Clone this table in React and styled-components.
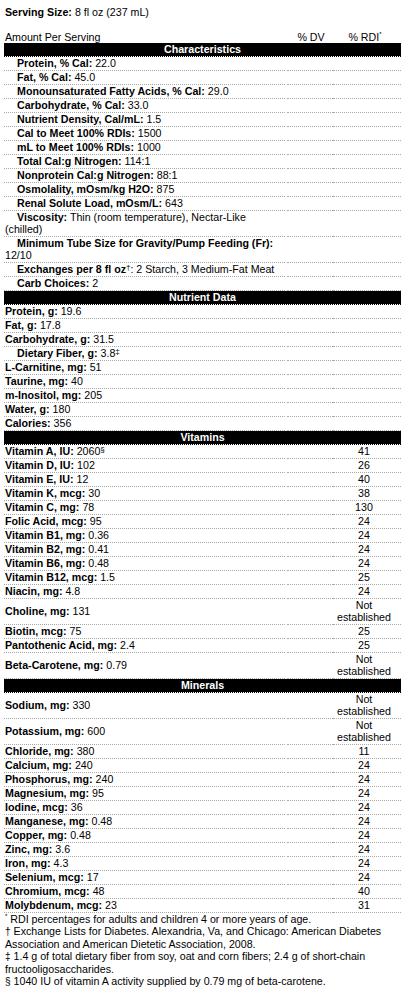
import React from 'react';
import styled, { createGlobalStyle } from 'styled-components';

const GlobalStyle = createGlobalStyle`
  body {
    margin: 0;
    background: #fff;
  }
`;

const characteristics = [
  { label: 'Protein, % Cal:', value: '22.0' },
  { label: 'Fat, % Cal:', value: '45.0' },
  { label: 'Monounsaturated Fatty Acids, % Cal:', value: '29.0' },
  { label: 'Carbohydrate, % Cal:', value: '33.0' },
  { label: 'Nutrient Density, Cal/mL:', value: '1.5' },
  { label: 'Cal to Meet 100% RDIs:', value: '1500' },
  { label: 'mL to Meet 100% RDIs:', value: '1000' },
  { label: 'Total Cal:g Nitrogen:', value: '114:1' },
  { label: 'Nonprotein Cal:g Nitrogen:', value: '88:1' },
  { label: 'Osmolality, mOsm/kg H2O:', value: '875' },
  { label: 'Renal Solute Load, mOsm/L:', value: '643' },
  { label: 'Viscosity:', value: 'Thin (room temperature), Nectar-Like', wrap: '(chilled)' },
  { label: 'Minimum Tube Size for Gravity/Pump Feeding (Fr):', value: '', wrap: '12/10' },
  { label: 'Exchanges per 8 fl oz', sup: '†', value: ': 2 Starch, 3 Medium-Fat Meat', bareColon: true },
  { label: 'Carb Choices:', value: '2' },
];

const nutrients = [
  { label: 'Protein, g:', value: '19.6' },
  { label: 'Fat, g:', value: '17.8' },
  { label: 'Carbohydrate, g:', value: '31.5' },
  { label: 'Dietary Fiber, g:', value: '3.8', valueSup: '‡', indent: true },
  { label: 'L-Carnitine, mg:', value: '51' },
  { label: 'Taurine, mg:', value: '40' },
  { label: 'm-Inositol, mg:', value: '205' },
  { label: 'Water, g:', value: '180' },
  { label: 'Calories:', value: '356' },
];

const NE = 'Not established';

const vitamins = [
  { label: 'Vitamin A, IU:', value: '2060', valueSup: '§', rdi: '41' },
  { label: 'Vitamin D, IU:', value: '102', rdi: '26' },
  { label: 'Vitamin E, IU:', value: '12', rdi: '40' },
  { label: 'Vitamin K, mcg:', value: '30', rdi: '38' },
  { label: 'Vitamin C, mg:', value: '78', rdi: '130' },
  { label: 'Folic Acid, mcg:', value: '95', rdi: '24' },
  { label: 'Vitamin B1, mg:', value: '0.36', rdi: '24' },
  { label: 'Vitamin B2, mg:', value: '0.41', rdi: '24' },
  { label: 'Vitamin B6, mg:', value: '0.48', rdi: '24' },
  { label: 'Vitamin B12, mcg:', value: '1.5', rdi: '25' },
  { label: 'Niacin, mg:', value: '4.8', rdi: '24' },
  { label: 'Choline, mg:', value: '131', rdi: NE },
  { label: 'Biotin, mcg:', value: '75', rdi: '25' },
  { label: 'Pantothenic Acid, mg:', value: '2.4', rdi: '25' },
  { label: 'Beta-Carotene, mg:', value: '0.79', rdi: NE },
];

const minerals = [
  { label: 'Sodium, mg:', value: '330', rdi: NE },
  { label: 'Potassium, mg:', value: '600', rdi: NE },
  { label: 'Chloride, mg:', value: '380', rdi: '11' },
  { label: 'Calcium, mg:', value: '240', rdi: '24' },
  { label: 'Phosphorus, mg:', value: '240', rdi: '24' },
  { label: 'Magnesium, mg:', value: '95', rdi: '24' },
  { label: 'Iodine, mcg:', value: '36', rdi: '24' },
  { label: 'Manganese, mg:', value: '0.48', rdi: '24' },
  { label: 'Copper, mg:', value: '0.48', rdi: '24' },
  { label: 'Zinc, mg:', value: '3.6', rdi: '24' },
  { label: 'Iron, mg:', value: '4.3', rdi: '24' },
  { label: 'Selenium, mcg:', value: '17', rdi: '24' },
  { label: 'Chromium, mcg:', value: '48', rdi: '40' },
  { label: 'Molybdenum, mcg:', value: '23', rdi: '31' },
];

const Label = ({ item }) => (
  <Text $indent={item.indent}>
    <b>{item.label}</b>
    {item.sup && <Sup>{item.sup}</Sup>}
    {item.bareColon ? item.value : item.value ? ` ${item.value}` : ''}
    {item.valueSup && <Sup>{item.valueSup}</Sup>}
    {item.wrap && (
      <>
        <br />
        {item.wrap}
      </>
    )}
  </Text>
);

const Section = ({ title, rows, indent }) => (
  <>
    <Bar>{title}</Bar>
    {rows.map((item) => (
      <Row key={item.label}>
        <FirstCell>
          <Label item={{ ...item, indent: indent || item.indent }} />
        </FirstCell>
        <Cell $center />
        <Cell $center>
          <Value>{item.rdi}</Value>
        </Cell>
      </Row>
    ))}
  </>
);

const App = () => {
  return (
    <Page>
      <GlobalStyle />
      <Serving>
        <b>Serving Size:</b> 8 fl oz (237 mL)
      </Serving>
      <HeadRow>
        <span>Amount Per Serving</span>
        <HeadCol>% DV</HeadCol>
        <HeadCol>
          % RDI<TinySup>*</TinySup>
        </HeadCol>
      </HeadRow>
      <Section title="Characteristics" rows={characteristics} indent />
      <Section title="Nutrient Data" rows={nutrients} />
      <Section title="Vitamins" rows={vitamins} />
      <Section title="Minerals" rows={minerals} />
      <Notes>
        <p>
          <TinySup>*</TinySup> RDI percentages for adults and children 4 or more years of age.
        </p>
        <p>
          <NoteMark>†</NoteMark> Exchange Lists for Diabetes. Alexandria, Va, and Chicago: American
          Diabetes Association and American Dietetic Association, 2008.
        </p>
        <p>
          <NoteMark>‡</NoteMark> 1.4 g of total dietary fiber from soy, oat and corn fibers; 2.4 g of
          short-chain fructooligosaccharides.
        </p>
        <p>
          <NoteMark>§</NoteMark> 1040 IU of vitamin A activity supplied by 0.79 mg of beta-carotene.
        </p>
      </Notes>
    </Page>
  );
};

export default App;

const Page = styled.div`
  width: 397px;
  padding: 6px 0 0 4px;
  font-family: 'Liberation Sans', Arial, sans-serif;
  font-size: 8pt;
  line-height: 12px;
  color: #000;
`;

const Serving = styled.div`
  padding-left: 1px;
  margin-bottom: 13px;
`;

const HeadRow = styled.div`
  display: grid;
  grid-template-columns: 283px 46px 62px;
  padding-left: 1px;
`;

const HeadCol = styled.span`
  text-align: center;
`;

const Bar = styled.div`
  background: #000;
  background-clip: padding-box;
  color: #fff;
  font-weight: 700;
  text-align: center;
  line-height: 13px;
  border-bottom: 1px dotted #000;
`;

const Row = styled.div`
  display: grid;
  grid-template-columns: 283px 46px 68px;
`;

const Cell = styled.div`
  display: flex;
  align-items: center;
  justify-content: ${(p) => (p.$center ? 'center' : 'flex-start')};
  padding-bottom: 1px;
  border-bottom: 1px dotted #a8a8a8;
`;

const FirstCell = styled(Cell)`
  margin-right: 2px;
  padding-left: 1px;
`;

const Text = styled.div`
  text-indent: ${(p) => (p.$indent ? '12px' : '0')};
`;

const Value = styled.div`
  text-align: center;
  width: 56px;
  margin-right: 6px;
`;

const Sup = styled.span`
  font-size: 8px;
  line-height: 0;
  vertical-align: 3px;
`;

const NoteMark = styled.span`
  font-size: 10px;
`;

const TinySup = styled.span`
  font-size: 6px;
  line-height: 0;
  vertical-align: 5px;
`;

const Notes = styled.div`
  padding-left: 1px;

  p {
    margin: 0;
  }
`;
